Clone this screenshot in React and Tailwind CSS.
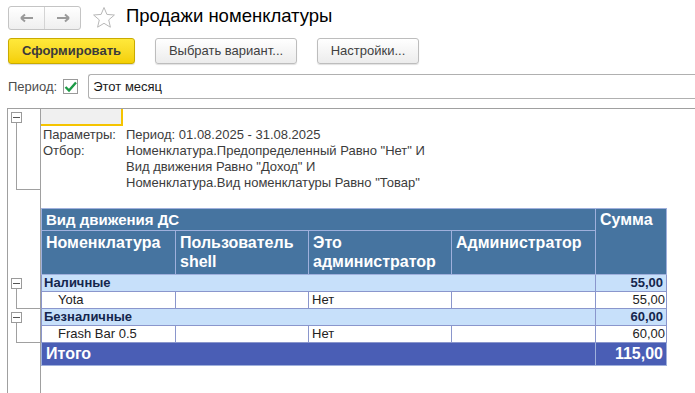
import React from 'react';

const font = { fontFamily: '"Liberation Sans", Arial, sans-serif' };

const MinusBox = () => (
    <div className="w-[11px] h-[11px] border border-[#9a9a9a] bg-white flex items-center justify-center shrink-0">
        <div className="w-[7px] h-px bg-[#555]" />
    </div>
);

const Row = ({ gutter, children, className = '' }) => (
    <div className={`flex ${className}`}>
        <div className="w-[33px] shrink-0 border-r border-[#a0a0a0] flex flex-col">{gutter}</div>
        <div className="flex-1 min-w-0">{children}</div>
    </div>
);

const GroupGutter = () => (
    <div className="flex flex-col h-full">
        <div className="pl-[3px] pt-[3px]"><MinusBox /></div>
        <div className="ml-[8px] flex-1 border-l border-[#a0a0a0]" />
    </div>
);

const LeafGutter = () => (
    <div className="ml-[8px] h-full border-l border-b border-[#a0a0a0]" />
);

const cols = 'grid grid-cols-[134px_133px_143px_144px_72px]';

const App = () => {
    return (
        <div className="w-[695px] h-[393px] bg-white overflow-hidden text-[#333]" style={font}>
            {/* top bar */}
            <div className="flex items-center h-[31px] pt-[4px]">
                <div className="ml-[8px] w-[73px] h-[24px] flex border border-[#c4c4c4] rounded-[3px] bg-gradient-to-b from-white to-[#efefef]">
                    <div className="w-[36px] flex items-center justify-center border-r border-[#d4d4d4]">
                        <svg width="14" height="10" viewBox="0 0 14 10">
                            <path d="M1 5 H13 M1 5 L5 1.5 M1 5 L5 8.5" stroke="#9a9a9a" strokeWidth="2" fill="none" />
                        </svg>
                    </div>
                    <div className="flex-1 flex items-center justify-center">
                        <svg width="14" height="10" viewBox="0 0 14 10">
                            <path d="M1 5 H13 M13 5 L9 1.5 M13 5 L9 8.5" stroke="#9a9a9a" strokeWidth="2" fill="none" />
                        </svg>
                    </div>
                </div>
                <svg className="ml-[11px]" width="24" height="23" viewBox="0 0 24 23">
                    <path d="M12 1.5 L14.9 8.4 L22.4 9 L16.7 13.9 L18.4 21.2 L12 17.3 L5.6 21.2 L7.3 13.9 L1.6 9 L9.1 8.4 Z" fill="none" stroke="#b8b8b8" strokeWidth="1" />
                </svg>
                <div className="ml-[10px] text-[18.5px] text-black leading-none pb-[3px]">Продажи номенклатуры</div>
            </div>

            {/* buttons */}
            <div className="flex items-center mt-[7px] h-[26px] pl-[8px] gap-[20px] text-[13px]">
                <div className="w-[127px] h-[26px] flex items-center justify-center rounded-[3px] border border-[#c9ab00] bg-gradient-to-b from-[#ffe93a] to-[#f4cf00] font-bold text-[#3a3a3a] shadow-[0_1px_1px_rgba(0,0,0,0.15)]">
                    Сформировать
                </div>
                <div className="w-[142px] h-[26px] flex items-center justify-center rounded-[3px] border border-[#bdbdbd] bg-gradient-to-b from-white to-[#ececec] text-[#404040] shadow-[0_1px_1px_rgba(0,0,0,0.12)]">
                    Выбрать вариант...
                </div>
                <div className="w-[102px] h-[26px] flex items-center justify-center rounded-[3px] border border-[#bdbdbd] bg-gradient-to-b from-white to-[#ececec] text-[#404040] shadow-[0_1px_1px_rgba(0,0,0,0.12)]">
                    Настройки...
                </div>
            </div>

            {/* period */}
            <div className="flex items-center mt-[10px] h-[25px] pl-[8px] text-[13px]">
                <span className="text-[#4d4d4d]">Период:</span>
                <div className="ml-[6px] w-[15px] h-[15px] border border-[#9a9a9a] bg-white flex items-center justify-center">
                    <svg width="13" height="12" viewBox="0 0 13 12">
                        <path d="M1.5 6 L5 9.5 L12 1.5" stroke="#1b9a45" strokeWidth="2.4" fill="none" />
                    </svg>
                </div>
                <div className="ml-[10px] flex-1 h-[25px] flex items-center pl-[4px] border border-r-0 border-[#b0b0b0] rounded-l-[3px] text-[#1a1a1a]">
                    Этот месяц
                </div>
            </div>

            {/* report */}
            <div className="mt-[9px] ml-[7px] border-l border-t border-[#a0a0a0] h-[286px] flex flex-col text-[13px]">
                <Row
                    gutter={
                        <div className="flex flex-col">
                            <div className="pl-[3px] pt-[3px]"><MinusBox /></div>
                            <div className="ml-[8px] h-[67px] border-l border-b border-[#a0a0a0]" />
                        </div>
                    }
                >
                    <div className="h-[99px]">
                        <div className="w-[82px] h-[17px] bg-[#f0f0f0] border-r-2 border-b-2 border-[#f5c400]" />
                        <div className="pl-[2px] text-[#3c3c3c]">
                            <div className="flex h-[17px] items-center">
                                <span className="w-[83px]">Параметры:</span>
                                <span>Период: 01.08.2025 - 31.08.2025</span>
                            </div>
                            <div className="flex">
                                <span className="w-[83px] h-[16px] leading-[16px]">Отбор:</span>
                                <div className="leading-[16px]">
                                    <div>Номенклатура.Предопределенный Равно "Нет" И</div>
                                    <div>Вид движения Равно "Доход" И</div>
                                    <div>Номенклатура.Вид номенклатуры Равно "Товар"</div>
                                </div>
                            </div>
                        </div>
                    </div>
                </Row>

                {/* table header */}
                <Row>
                    <div className="w-[626px] bg-[#4674a0] text-white font-bold text-[16px] border border-[#9fb0dc] flex">
                        <div className="w-[554px] border-r border-[#9fb0dc]">
                            <div className="h-[22px] pl-[4px] leading-[22px] text-[15px] border-b border-[#9fb0dc]">Вид движения ДС</div>
                            <div className="grid grid-cols-[134px_133px_143px_144px] h-[43px] leading-[19px]">
                                <div className="pl-[4px] pt-[2px] border-r border-[#9fb0dc]">Номенклатура</div>
                                <div className="pl-[4px] pt-[2px] border-r border-[#9fb0dc]">Пользователь<br />shell</div>
                                <div className="pl-[4px] pt-[2px] border-r border-[#9fb0dc]">Это<br />администратор</div>
                                <div className="pl-[4px] pt-[2px]">Администратор</div>
                            </div>
                        </div>
                        <div className="flex-1 pl-[4px] leading-[22px]">Сумма</div>
                    </div>
                </Row>

                {[
                    { group: 'Наличные', item: 'Yota', sum: '55,00' },
                    { group: 'Безналичные', item: 'Frash Bar 0.5', sum: '60,00' },
                ].map((g) => (
                    <React.Fragment key={g.group}>
                        <Row gutter={<GroupGutter />}>
                            <div className="w-[626px] h-[17px] flex bg-[#c7e0fa] border-x border-b border-[#8a96cc] font-bold text-[13px] text-[#14264d] leading-[16px]">
                                <div className="w-[554px] pl-[2px] border-r border-[#8a96cc]">{g.group}</div>
                                <div className="flex-1 text-right pr-[3px]">{g.sum}</div>
                            </div>
                        </Row>
                        <Row gutter={<LeafGutter />}>
                            <div className={`${cols} w-[626px] h-[17px] bg-white border-x border-b border-[#8a96cc] text-[#222] leading-[16px]`}>
                                <div className="pl-[16px] border-r border-[#8a96cc]">{g.item}</div>
                                <div className="border-r border-[#8a96cc]" />
                                <div className="pl-[3px] border-r border-[#8a96cc]">Нет</div>
                                <div className="border-r border-[#8a96cc]" />
                                <div className="text-right pr-[3px]">{g.sum}</div>
                            </div>
                        </Row>
                    </React.Fragment>
                ))}

                <Row className="flex-1">
                    <div className="w-[626px] h-[23px] flex bg-[#4a5eb5] border-x border-b border-[#9fb0dc] text-white font-bold text-[16px] leading-[22px]">
                        <div className="w-[554px] pl-[4px] border-r border-[#9fb0dc]">Итого</div>
                        <div className="flex-1 text-right pr-[3px]">115,00</div>
                    </div>
                </Row>
            </div>
        </div>
    );
};

export default App;
